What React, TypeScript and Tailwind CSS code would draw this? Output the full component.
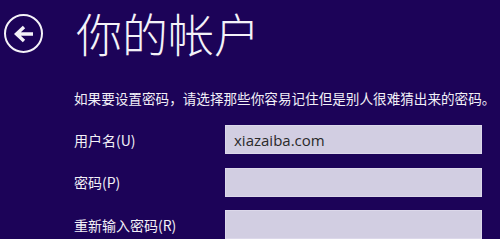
import React from "react";

const cjk = { fontFamily: '"Noto Sans CJK SC", "Noto Sans", sans-serif' };

function Row({ label, value }: { label: string; value?: string }) {
  return (
    <div className="flex items-center h-[29px]">
      <div className="w-[151px] text-[14px] text-[#f2f0f7] leading-[20px]" style={cjk}>
        {label}
      </div>
      <div className="w-[257px] h-[29px] bg-[#d2cee2] border border-[#dcd8ea] flex items-center pl-[8px]">
        {value && (
          <span
            className="text-[15px] text-[#2a2a2a] leading-[20px]"
            style={{ fontFamily: '"Open Sans", "Noto Sans", sans-serif' }}
          >
            {value}
          </span>
        )}
      </div>
    </div>
  );
}

export default function App() {
  return (
    <div className="w-[500px] h-[239px] bg-[#1c0358] overflow-hidden flex flex-col">
      <div className="h-[69px] flex items-center">
        <div className="ml-[4px] w-[39px] h-[39px] rounded-full border-2 border-[#f4f2f8] flex items-center justify-center">
          <svg width="22" height="18" viewBox="0 0 22 18">
            <path d="M20 9 H4 M11 2 L3.5 9 L11 16" stroke="#f4f2f8" strokeWidth="3.4" fill="none" strokeLinejoin="miter" />
          </svg>
        </div>
        <div className="ml-[33px] text-[46px] font-light text-[#f4f2f8] leading-[56px] -mt-[3px]" style={cjk}>
          你的帐户
        </div>
      </div>
      <div className="mt-[21px] pl-[74px] text-[13.6px] leading-[20px] text-[#f2f0f7] whitespace-nowrap" style={cjk}>
        如果要设置密码，请选择那些你容易记住但是别人很难猜出来的密码。
      </div>
      <div className="mt-[17px] pl-[74px] flex flex-col gap-[13.5px]">
        <Row label="用户名(U)" value="xiazaiba.com" />
        <Row label="密码(P)" />
        <Row label="重新输入密码(R)" />
      </div>
    </div>
  );
}
